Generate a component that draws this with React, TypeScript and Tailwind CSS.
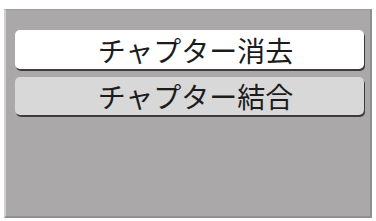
import React from "react";

export default function App() {
  const font = { fontFamily: '"Noto Sans CJK JP", "Noto Sans", sans-serif' };
  return (
    <div className="w-[376px] h-[221px] bg-white overflow-hidden pt-[9px] pl-[4px]" style={font}>
      <div className="w-[368px] h-[209px] bg-[#aaa8a8] border-l-[2px] border-l-[#cfcfcf] border-t-[1px] border-t-[#9a9a9a] border-r-[2px] border-r-[#8f8f8f] border-b-[2px] border-b-[#8f8f8f] pl-[9px] pt-[20px] flex flex-col gap-[8px]">
        <div className="w-[349px] h-[39px] bg-white rounded-[5px] shadow-[1px_2px_0_#3c3c3c] flex items-center justify-center pl-[12px] text-[28px] leading-none text-[#1c1c1c]">
          チャプター消去
        </div>
        <div className="w-[349px] h-[38px] bg-[#d9d8d8] rounded-[5px] shadow-[1px_2px_0_#3c3c3c] flex items-center justify-center pl-[12px] text-[28px] leading-none text-[#1c1c1c]">
          チャプター結合
        </div>
      </div>
    </div>
  );
}
